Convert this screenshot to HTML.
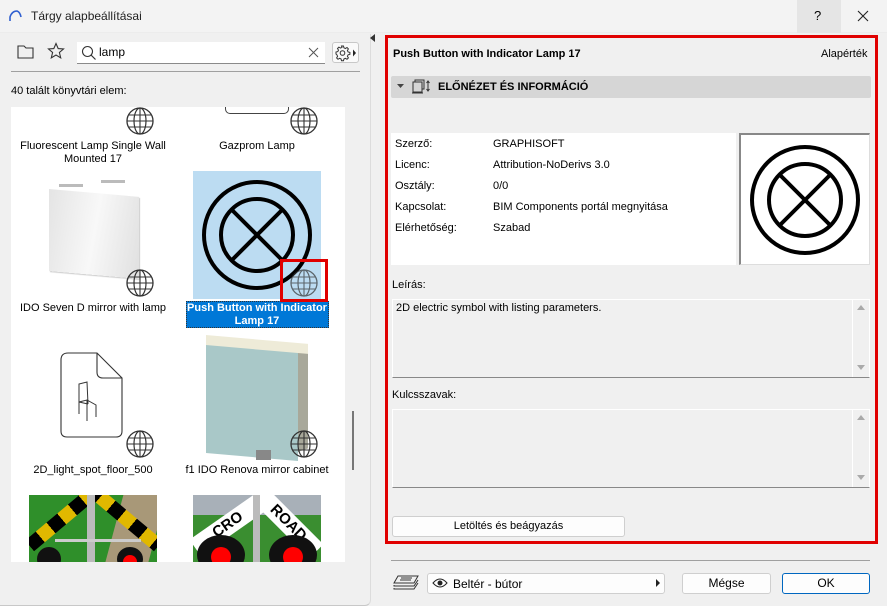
<!DOCTYPE html>
<html><head><meta charset="utf-8"><style>
*{box-sizing:border-box;margin:0;padding:0}
body{width:887px;height:606px;background:#f0f0f0;font-family:"Liberation Sans",sans-serif;font-size:11px;color:#000;position:relative;overflow:hidden}
.a{position:absolute}
.t{position:absolute;white-space:nowrap}
.lbl{position:absolute;width:164px;text-align:center;line-height:13px;font-size:11px}
.btn{position:absolute;background:#fdfdfd;border:1px solid #cfcfcf;border-radius:3px;text-align:center;line-height:18px}
</style></head><body>
<div class="a" style="left:0;top:0;width:887px;height:33px;background:#f3f3f3;border-bottom:1px solid #ececec"></div>
<svg class="a" style="left:8px;top:9px" width="14" height="14"><path d="M2 12 L2 8 Q4 2 9 2 Q12 3 13 8" fill="none" stroke="#2f5fd0" stroke-width="1.6"/></svg>
<div class="t" style="left:31px;top:9px;font-size:12px;color:#222">Tárgy alapbeállításai</div>
<div class="a" style="left:797px;top:0;width:44px;height:33px;background:#e5e5e5"></div>
<div class="t" style="left:814px;top:8px;font-size:13px">?</div>
<svg class="a" style="left:857px;top:10px" width="12" height="12"><path d="M1 1L11 11M11 1L1 11" stroke="#222" stroke-width="1.1"/></svg>

<div class="a" style="left:0;top:34px;width:371px;height:572px;border-right:1px solid #dcdcdc;border-bottom:1px solid #c8c8c8;border-radius:0 0 6px 0"></div>
<svg class="a" style="left:17px;top:44px" width="18" height="16"><path d="M1 2H7L9 4H16V14H1Z" fill="none" stroke="#333" stroke-width="1.1"/></svg>
<svg class="a" style="left:47px;top:42px" width="18" height="18"><path d="M9 1.5L11.2 6.6 16.5 7 12.4 10.5 13.7 15.8 9 13 4.3 15.8 5.6 10.5 1.5 7 6.8 6.6Z" fill="none" stroke="#333" stroke-width="1.1"/></svg>
<div class="a" style="left:77px;top:42px;width:248px;height:22px;background:#fff;border-bottom:1px solid #8a8a8a"></div>
<svg class="a" style="left:81px;top:45px" width="16" height="16"><circle cx="6.5" cy="6.5" r="5" fill="none" stroke="#333" stroke-width="1.1"/><path d="M10 10L14.5 14.5" stroke="#333" stroke-width="1.2"/></svg>
<div class="t" style="left:99px;top:45px;font-size:12px">lamp</div>
<svg class="a" style="left:308px;top:47px" width="12" height="12"><path d="M1 1L10 10M10 1L1 10" stroke="#555" stroke-width="1"/></svg>
<div class="a" style="left:332px;top:42px;width:27px;height:21px;background:#fafafa;border:1px solid #c8c8c8;border-radius:3px"></div>
<svg class="a" style="left:334px;top:44px" width="24" height="18"><path d="M7.5 2h2l.4 1.8 1.5.7 1.6-1 1.4 1.4-1 1.6.7 1.5 1.8.4v2l-1.8.4-.7 1.5 1 1.6-1.4 1.4-1.6-1-1.5.7-.4 1.8h-2l-.4-1.8-1.5-.7-1.6 1-1.4-1.4 1-1.6-.7-1.5L2 10V8l1.8-.4.7-1.5-1-1.6 1.4-1.4 1.6 1 1.5-.7Z" fill="none" stroke="#333" stroke-width="1"/><circle cx="8.5" cy="9" r="2.3" fill="none" stroke="#333"/><path d="M19 5.5L22 9 19 12.5Z" fill="#222"/></svg>
<div class="a" style="left:11px;top:71px;width:349px;height:1px;background:#a0a0a0"></div>
<div class="t" style="left:11px;top:85px">40 talált könyvtári elem:</div>

<div class="a" style="left:11px;top:107px;width:334px;height:455px;background:#fff;overflow:hidden">
 <div class="a" style="left:214px;top:-2px;width:64px;height:9px;border:1px solid #444;border-top:none;border-radius:0 0 5px 5px"></div>
 <div class="lbl" style="left:0;top:33px">Fluorescent Lamp Single Wall<br>Mounted 17</div>
 <div class="lbl" style="left:164px;top:33px">Gazprom Lamp</div>
 <div class="a" style="left:38px;top:82px;width:90px;height:82px;background:linear-gradient(100deg,#e4e4e4,#f8f8f8 50%,#e0e0e0);transform:skewY(5deg);transform-origin:0 0;box-shadow:1px 1px 1px #ccc"></div>
 <div class="a" style="left:48px;top:77px;width:24px;height:3px;background:#bbb"></div>
 <div class="a" style="left:90px;top:73px;width:24px;height:3px;background:#bbb"></div>
 <div class="lbl" style="left:0;top:195px">IDO Seven D mirror with lamp</div>
 <div class="a" style="left:182px;top:64px;width:128px;height:128px;background:#bcdcf2"></div>
 <svg class="a" style="left:182px;top:64px" width="128" height="128"><circle cx="64" cy="64" r="53" fill="none" stroke="#000" stroke-width="4"/><circle cx="64" cy="64" r="36" fill="none" stroke="#000" stroke-width="4"/><path d="M38.5 38.5L89.5 89.5M89.5 38.5L38.5 89.5" stroke="#000" stroke-width="4"/></svg>
 <div class="a" style="left:175px;top:194px;width:143px;height:27px;background:#0078d7;border:1px dotted #333"></div>
 <div class="lbl" style="left:164px;top:195px;color:#fff;font-weight:bold;width:164px">Push Button with Indicator<br>Lamp 17</div>
 <div class="a" style="left:269px;top:152px;width:48px;height:43px;border:3px solid #e00000"></div>
 <svg class="a" style="left:48px;top:245px" width="66" height="88"><path d="M14 1H38L63 26V79Q63 85 57 85H8Q2 85 2 79V8Q2 1 9 1Z M38 1V20Q38 26 44 26H63" fill="none" stroke="#333" stroke-width="1.1"/><path d="M20 62V32L28 30 29 52M20 50L28 48 37 53V65M28 48V69M20 50L29 52" fill="none" stroke="#333" stroke-width="1"/></svg>
 <div class="lbl" style="left:0;top:357px">2D_light_spot_floor_500</div>
 <div class="a" style="left:195px;top:236px;width:92px;height:110px;background:#a9c8c8;transform:skewY(5deg);transform-origin:0 0"></div>
 <div class="a" style="left:287px;top:243px;width:10px;height:102px;background:#a8a89a;transform:skewY(-20deg);transform-origin:0 0"></div>
 <div class="a" style="left:195px;top:228px;width:102px;height:10px;background:#eeebd8;transform:skewY(5deg);transform-origin:0 0"></div>
 <div class="a" style="left:245px;top:343px;width:15px;height:10px;background:#888"></div>
 <div class="lbl" style="left:164px;top:357px">f1 IDO Renova mirror cabinet</div>
 <div class="a" style="left:18px;top:388px;width:128px;height:70px;background:#2f8f2a;overflow:hidden">
  <div class="a" style="left:85px;top:0;width:43px;height:70px;background:#a89878;transform:skewX(-15deg)"></div>
  <div class="a" style="left:-10px;top:15px;width:90px;height:14px;background:repeating-linear-gradient(90deg,#000 0 14px,#e0b800 14px 28px);transform:rotate(-40deg)"></div>
  <div class="a" style="left:50px;top:15px;width:90px;height:14px;background:repeating-linear-gradient(90deg,#000 0 14px,#e0b800 14px 28px);transform:rotate(40deg)"></div>
  <div class="a" style="left:58px;top:0;width:8px;height:70px;background:#bbb"></div>
  <div class="a" style="left:26px;top:44px;width:86px;height:3px;background:#ccc"></div>
  <div class="a" style="left:8px;top:52px;width:24px;height:24px;border-radius:50%;background:#111"></div>
  <div class="a" style="left:88px;top:52px;width:26px;height:24px;border-radius:50%;background:#111"></div>
  <div class="a" style="left:94px;top:60px;width:14px;height:14px;border-radius:50%;background:#f00"></div>
 </div>
 <div class="a" style="left:182px;top:388px;width:128px;height:70px;background:#3a8e30;overflow:hidden">
  <div class="a" style="left:0;top:0;width:128px;height:20px;background:#a8b0b8"></div>
  <div class="a" style="left:-5px;top:20px;width:80px;height:20px;background:#fff;transform:rotate(-35deg);font:bold 15px 'Liberation Sans';color:#000;text-align:center;line-height:20px">CRO</div>
  <div class="a" style="left:55px;top:18px;width:80px;height:20px;background:#fff;transform:rotate(45deg);font:bold 15px 'Liberation Sans';color:#000;text-align:center;line-height:20px">ROAD</div>
  <div class="a" style="left:60px;top:0;width:7px;height:70px;background:#bbb"></div>
  <div class="a" style="left:4px;top:40px;width:48px;height:40px;border-radius:50%;background:#111"></div>
  <div class="a" style="left:76px;top:40px;width:48px;height:40px;border-radius:50%;background:#111"></div>
  <div class="a" style="left:18px;top:52px;width:20px;height:20px;border-radius:50%;background:#f00"></div>
  <div class="a" style="left:90px;top:52px;width:20px;height:20px;border-radius:50%;background:#f00"></div>
 </div>
</div>
<svg width="0" height="0" style="position:absolute"><defs><g id="g"><circle cx="14" cy="14" r="13" fill="none" stroke="#333" stroke-width="1.3"/><ellipse cx="14" cy="14" rx="6" ry="13" fill="none" stroke="#333" stroke-width="1.2"/><path d="M14 1V27M1 14H27M3 8H25M3 20H25" stroke="#333" stroke-width="1.1"/></g></defs></svg>
<svg class="a" style="left:126px;top:107px" width="29" height="29"><use href="#g"/></svg>
<svg class="a" style="left:290px;top:107px" width="29" height="29"><use href="#g"/></svg>
<svg class="a" style="left:126px;top:269px" width="29" height="29"><use href="#g"/></svg>
<svg class="a" style="left:290px;top:269px" width="29" height="29" opacity=".7"><use href="#g"/></svg>
<svg class="a" style="left:126px;top:430px" width="29" height="29"><use href="#g"/></svg>
<svg class="a" style="left:290px;top:430px" width="29" height="29"><use href="#g"/></svg>
<div class="a" style="left:352px;top:411px;width:2px;height:59px;background:#777"></div>
<svg class="a" style="left:370px;top:34px" width="6" height="8"><path d="M5 0V8L0 4Z" fill="#333"/></svg>

<div class="a" style="left:385px;top:35px;width:493px;height:509px;border:3px solid #e00000"></div>
<div class="t" style="left:393px;top:48px;font-weight:bold">Push Button with Indicator Lamp 17</div>
<div class="t" style="left:821px;top:48px">Alapérték</div>
<div class="a" style="left:391px;top:76px;width:480px;height:22px;background:#d6d6d6;border-radius:2px"></div>
<svg class="a" style="left:397px;top:84px" width="8" height="6"><path d="M0 0H7L3.5 4Z" fill="#444"/></svg>
<svg class="a" style="left:412px;top:79px" width="20" height="16"><rect x="3" y="1" width="9" height="9" fill="none" stroke="#333"/><rect x="1" y="3" width="9" height="10" fill="#d6d6d6" stroke="#333"/><path d="M0 14H11M16 2V12M14.5 4L16 2 17.5 4M14.5 10L16 12 17.5 10" stroke="#333" fill="none"/></svg>
<div class="t" style="left:438px;top:81px;font-weight:bold">ELŐNÉZET ÉS INFORMÁCIÓ</div>

<div class="a" style="left:391px;top:133px;width:345px;height:132px;background:#fff"></div>
<div class="t" style="left:395px;top:138px">Szerző:</div><div class="t" style="left:493px;top:138px">GRAPHISOFT</div>
<div class="t" style="left:395px;top:159px">Licenc:</div><div class="t" style="left:493px;top:159px">Attribution-NoDerivs 3.0</div>
<div class="t" style="left:395px;top:180px">Osztály:</div><div class="t" style="left:493px;top:180px">0/0</div>
<div class="t" style="left:395px;top:201px">Kapcsolat:</div><div class="t" style="left:493px;top:201px">BIM Components portál megnyitása</div>
<div class="t" style="left:395px;top:222px">Elérhetőség:</div><div class="t" style="left:493px;top:222px">Szabad</div>
<div class="a" style="left:739px;top:133px;width:131px;height:132px;background:#fff;border:1px solid #ddd;border-left:2px solid #888;border-top:2px solid #888"></div>
<svg class="a" style="left:740px;top:134px" width="130" height="130"><circle cx="65" cy="66" r="53" fill="none" stroke="#000" stroke-width="4"/><circle cx="65" cy="66" r="36" fill="none" stroke="#000" stroke-width="4"/><path d="M39.5 40.5L90.5 91.5M90.5 40.5L39.5 91.5" stroke="#000" stroke-width="4"/></svg>

<div class="t" style="left:392px;top:279px">Leírás:</div>
<div class="a" style="left:392px;top:299px;width:478px;height:79px;border:1px solid #fff;border-bottom:1px solid #888"></div>
<div class="a" style="left:852px;top:300px;width:1px;height:77px;background:#fff"></div>
<div class="t" style="left:396px;top:302px">2D electric symbol with listing parameters.</div>
<svg class="a" style="left:856px;top:304px" width="10" height="70"><path d="M1 6L5 1 9 6Z M1 61L5 66 9 61Z" fill="#aaa"/></svg>
<div class="t" style="left:392px;top:389px">Kulcsszavak:</div>
<div class="a" style="left:392px;top:409px;width:478px;height:79px;border:1px solid #fff;border-bottom:1px solid #888"></div>
<div class="a" style="left:852px;top:410px;width:1px;height:77px;background:#fff"></div>
<svg class="a" style="left:856px;top:414px" width="10" height="70"><path d="M1 6L5 1 9 6Z M1 61L5 66 9 61Z" fill="#aaa"/></svg>
<div class="btn" style="left:392px;top:516px;width:233px;height:21px">Letöltés és beágyazás</div>

<div class="a" style="left:391px;top:560px;width:479px;height:1px;background:#a0a0a0"></div>
<svg class="a" style="left:392px;top:574px" width="28" height="18"><path d="M6 2H26L22 9H2Z M2 11L2 12H22L26 6 M2 14V15H22L26 9" fill="none" stroke="#333"/><path d="M9 4H20M8 6H19" stroke="#333"/></svg>
<div class="a" style="left:427px;top:573px;width:238px;height:21px;background:#fdfdfd;border:1px solid #cfcfcf;border-radius:3px"></div>
<svg class="a" style="left:432px;top:577px" width="16" height="12"><path d="M1 6Q8 -2 15 6Q8 14 1 6Z" fill="none" stroke="#222"/><circle cx="8" cy="6" r="2.5" fill="#222"/></svg>
<div class="t" style="left:453px;top:577px;font-size:12px">Beltér - bútor</div>
<svg class="a" style="left:656px;top:579px" width="5" height="8"><path d="M0 0L4 4 0 8Z" fill="#222"/></svg>
<div class="btn" style="left:682px;top:573px;width:89px;height:21px;font-size:12px">Mégse</div>
<div class="btn" style="left:782px;top:573px;width:88px;height:21px;border-color:#0067c0;font-size:12px">OK</div>
</body></html>
